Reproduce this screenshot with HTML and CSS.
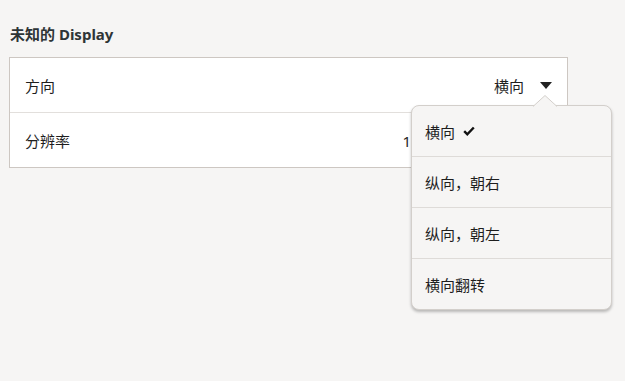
FILE: index.html
```html
<!DOCTYPE html>
<html lang="zh-CN">
<head>
<meta charset="utf-8">
<title>Display</title>
<link rel="stylesheet" href="styles.css">
</head>
<body>
<div class="page">
  <h1 class="title">未知的 Display</h1>
  <div class="frame">
    <div class="row">
      <span class="label">方向</span>
      <span class="value">横向<svg class="arrow" width="12" height="7" viewBox="0 0 12 7"><path d="M0 0h12L6 7z" fill="#222"/></svg></span>
    </div>
    <div class="row">
      <span class="label">分辨率</span>
      <span class="value">1024 × 768 (4∶3)<svg class="arrow" width="12" height="7" viewBox="0 0 12 7"><path d="M0 0h12L6 7z" fill="#222"/></svg></span>
    </div>
  </div>
  <div class="popover">
    <svg class="tail" width="24" height="12" viewBox="0 0 24 12"><path d="M0 11.5L12 0.5L24 11.5" fill="#f6f5f4" stroke="#d3cfcb" stroke-width="1"/></svg>
    <div class="menu">
      <div class="item">横向<svg class="check" width="12" height="10" viewBox="0 0 12 10"><path d="M1.2 5.2L4.3 8.3L10.8 1.5" fill="none" stroke="#111" stroke-width="2.4"/></svg></div>
      <div class="item">纵向，朝右</div>
      <div class="item">纵向，朝左</div>
      <div class="item">横向翻转</div>
    </div>
  </div>
</div>
</body>
</html>
```
FILE: styles.css
```css
html, body {
  margin: 0;
  padding: 0;
  background: #f6f5f4;
}
body {
  font-family: "Noto Sans", "Noto Sans CJK SC", sans-serif;
  font-size: 15px;
  color: #1e1e1e;
  width: 625px;
  height: 381px;
  overflow: hidden;
}
.page {
  position: relative;
  padding: 24px 58px 0 9px;
}
.title {
  margin: 0 0 13px 1px;
  font-size: 15px;
  font-weight: bold;
  color: #2e3436;
  line-height: 20px;
  height: 20px;
}
.frame {
  background: #fff;
  border: 1px solid #cdc7c2;
  width: 557px;
}
.row {
  height: 54px;
  display: flex;
  align-items: center;
  justify-content: space-between;
  padding: 0 15px;
}
.row + .row {
  border-top: 1px solid #e2dfdc;
}
.value {
  display: flex;
  align-items: center;
}
.arrow {
  margin-left: 16px;
}
.popover {
  position: absolute;
  left: 411px;
  top: 95px;
  width: 201px;
}
.tail {
  position: absolute;
  left: 122px;
  top: 0;
  z-index: 2;
}
.menu {
  margin-top: 10px;
  background: #f6f5f4;
  border: 1px solid #d3cfcb;
  border-radius: 8px;
  box-shadow: 0 2px 3px rgba(0,0,0,0.25);
  overflow: hidden;
}
.item {
  height: 50px;
  display: flex;
  align-items: center;
  padding: 0 13px;
}
.item + .item {
  border-top: 1px solid #dedbd8;
}
.check {
  margin-left: 8px;
}
```
